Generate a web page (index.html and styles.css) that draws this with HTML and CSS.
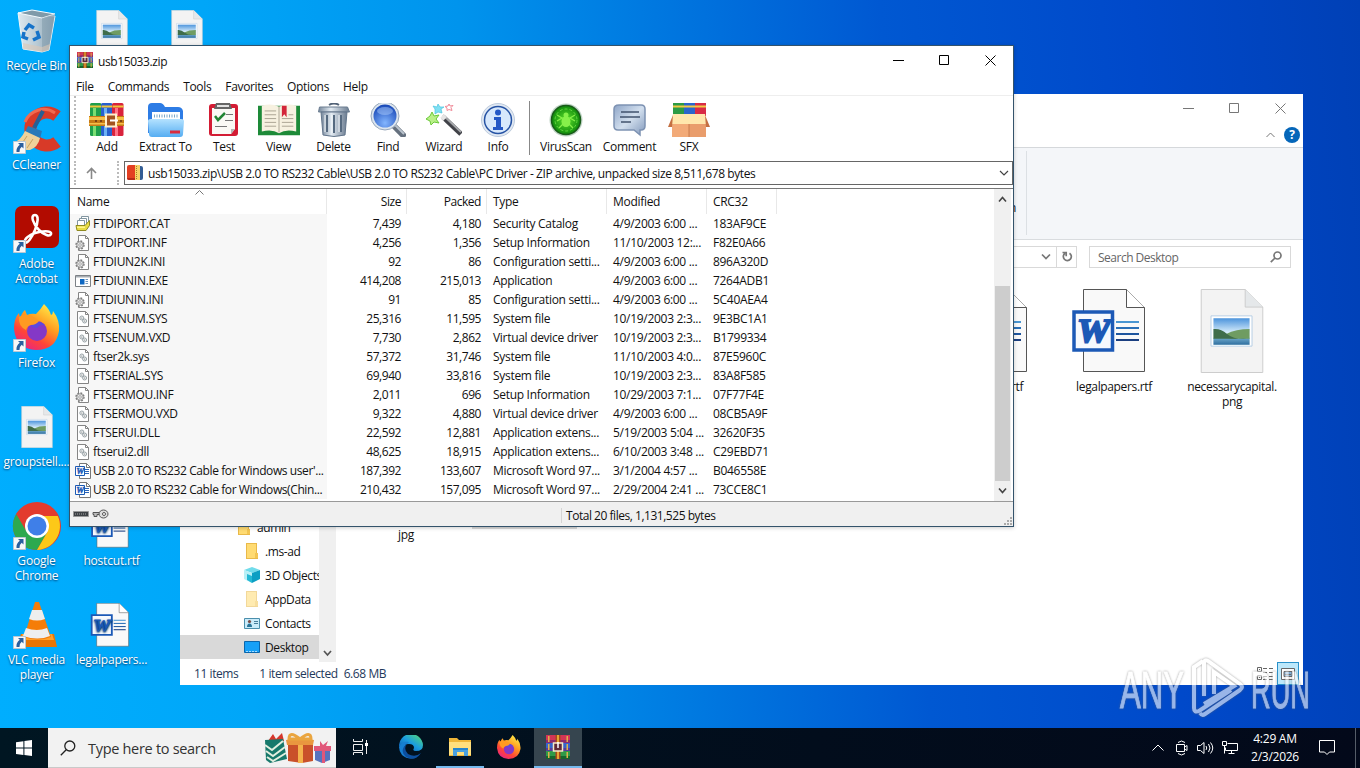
FILE: index.html
```html
<!DOCTYPE html>
<html lang="en">

<head>
    <meta charset="UTF-8">
    <meta name="viewport" content="width=device-width, initial-scale=1.0">
    <title>usb15033.zip</title>
    <link rel="stylesheet" href="styles.css">
</head>

<body>
    <!-- shared icons -->
    <svg class="defs" width="0" height="0">
        <defs>
            <linearGradient id="gSky" x1="0" y1="0" x2="0" y2="1">
                <stop offset="0" stop-color="#4c94dc" /><stop offset=".5" stop-color="#d3eafa" /><stop offset="1" stop-color="#e6f3fa" />
            </linearGradient>
            <linearGradient id="gSea" x1="0" y1="0" x2="0" y2="1">
                <stop offset="0" stop-color="#6fa9cc" /><stop offset="1" stop-color="#2f6f9f" />
            </linearGradient>
            <linearGradient id="gFox" x1="0.8" y1="0" x2="0.2" y2="1">
                <stop offset="0" stop-color="#fff04a" /><stop offset=".4" stop-color="#ff9a20" /><stop offset=".7" stop-color="#ff4438" /><stop offset="1" stop-color="#e6208c" />
            </linearGradient>
            <linearGradient id="gEdge" x1="0" y1="1" x2="1" y2="0">
                <stop offset="0" stop-color="#0b50a8" /><stop offset=".5" stop-color="#1b9de0" /><stop offset="1" stop-color="#5be06a" />
            </linearGradient>
            <linearGradient id="gMetal" x1="0" y1="0" x2="1" y2="0">
                <stop offset="0" stop-color="#76879b" /><stop offset=".4" stop-color="#e3ebf2" /><stop offset="1" stop-color="#6a7b90" />
            </linearGradient>
            <linearGradient id="gFolder" x1="0" y1="0" x2="0" y2="1">
                <stop offset="0" stop-color="#b4e2ff" /><stop offset="1" stop-color="#55adf2" />
            </linearGradient>
            <linearGradient id="gBubble" x1="0" y1="0" x2="1" y2="1">
                <stop offset="0" stop-color="#8ea5c7" /><stop offset=".5" stop-color="#d2dfee" /><stop offset="1" stop-color="#8198bb" />
            </linearGradient>
            <linearGradient id="gBin" x1="0" y1="0" x2="1" y2="0">
                <stop offset="0" stop-color="#dfe9ef" /><stop offset=".5" stop-color="#b9cbd6" /><stop offset="1" stop-color="#8aa3b4" />
            </linearGradient>
            <radialGradient id="gLens" cx=".5" cy=".8" r=".8">
                <stop offset="0" stop-color="#83b6ff" /><stop offset="1" stop-color="#1646b6" />
            </radialGradient>
            <radialGradient id="gVirus">
                <stop offset="0" stop-color="#5ee02d" /><stop offset="1" stop-color="#0f8a0b" />
            </radialGradient>
        </defs>

        <symbol id="winrar" viewBox="0 0 24 24">
            <path fill="#d23556" d="M0 0h24v8H0z" />
            <path fill="#8c2a6e" d="M0 5h24v3H0z" />
            <path fill="#3563cc" d="M0 8h24v8H0z" />
            <path fill="#5a3a98" d="M0 13h24v3H0z" />
            <path fill="#2f9a48" d="M0 16h24v8H0z" />
            <path fill="#15662c" d="M0 21h24v3H0z" />
            <path fill="#e0b24a" d="M2 1h1.500v6H2zm0 8h1.500v6H2zm0 8h1.500v6H2zm18.500-16H22v6h-1.500zm0 8H22v6h-1.500zm0 8H22v6h-1.500z" />
            <path fill="#a8481a" d="M9.500 0h5v24h-5z" />
            <path fill="#e6a534" d="M11 0h2v24h-2z" />
            <path fill="#5f2a38" stroke="#f4e9c6" stroke-width="1.500" d="M7.500 8h9v8h-9z" />
            <path stroke="#fff" stroke-width="1.500" d="M12 7v6" />
        </symbol>

        <symbol id="books" viewBox="0 0 36 34">
            <rect x="1" y="0" width="11.500" height="33" rx="1.500" fill="#1f9f4b" />
            <rect x="12" y="0" width="11.500" height="33" rx="1.500" fill="#2860ce" />
            <rect x="23" y="0" width="11.500" height="33" rx="1.500" fill="#d9233c" />
            <path fill="#7ade72" d="M4 5h3v28H4z" />
            <path fill="#6cb2f5" d="M15 5h3v28h-3z" />
            <path fill="#ff7288" d="M26 5h3v28h-3z" />
            <path fill="#f0c63c" d="M1 2.500h11v2H1zm11.500 0H23v2H12.500zm11 0h11v2h-11z" />
            <path fill="#c67a18" d="M0 13h35v10H0z" />
            <path fill="#f5c04a" d="M0 14h35v3H0zm0 6h35v1.500H0z" />
            <rect x="17" y="11.500" width="10" height="12" fill="#a35420" stroke="#fff0cc" stroke-width="2" />
            <path stroke="#fff" stroke-width="2" d="M21 17.500h8" />
            <path fill="#7d4314" d="M6 17h2v2H6zm5 0h2v2h-2zM31 17h2v2h-2z" />
        </symbol>

        <symbol id="gear-file" viewBox="0 0 16 16">
            <path fill="#fff" stroke="#858585" d="M3.500.5h7l3 3v12h-10z" />
            <path fill="none" stroke="#858585" d="M10.500.5v3h3" />
            <circle cx="5" cy="10" r="4" fill="#e3e3e3" stroke="#7d7d7d" stroke-width="1.400" stroke-dasharray="1.800 1.340" />
            <circle cx="5" cy="10" r="3.200" fill="#e9e9e9" stroke="#858585" stroke-width=".8" />
            <circle cx="5" cy="10" r="1.300" fill="#fff" stroke="#858585" stroke-width=".7" />
        </symbol>

        <symbol id="sys-file" viewBox="0 0 16 16">
            <path fill="#fff" stroke="#858585" d="M2.500.5h8l3 3v12h-11z" />
            <path fill="none" stroke="#858585" d="M10.500.5v3h3" />
            <circle cx="6.800" cy="7" r="2" fill="#eef1f2" stroke="#8f999d" stroke-width=".9" />
            <circle cx="9.600" cy="10" r="2" fill="#eef1f2" stroke="#8f999d" stroke-width=".9" />
            <circle cx="6.800" cy="7" r=".6" fill="#777" />
            <circle cx="9.600" cy="10" r=".6" fill="#777" />
        </symbol>

        <symbol id="cat-file" viewBox="0 0 16 16">
            <path fill="#fff" stroke="#8296a0" d="M6.500.5h7v8h-7z" />
            <path fill="#fff" stroke="#8296a0" d="M4.500 2.500h7v7h-7z" />
            <path fill="#fff" stroke="#8296a0" d="M2.500 4.500h7v6h-7z" />
            <path fill="#e8dc45" stroke="#8f8a20" d="M1 9.500h9l4.500-5v5l-3.500 5H2z" />
            <path fill="#fff58a" d="M2 10.500h8v1.500H2z" />
        </symbol>

        <symbol id="exe-file" viewBox="0 0 16 16">
            <path fill="#fff" stroke="#7c8186" d="M.5 2.500h15v11H.5z" />
            <path fill="#a7adb2" d="M1 3h14v1.500H1z" />
            <path fill="#0d67c2" d="M5 6h4.500v5.500H5z" />
            <path stroke="#6e96bd" d="M10.500 6.500H13m-2.500 2H13m-2.500 2H13" />
        </symbol>

        <symbol id="doc-file" viewBox="0 0 16 16">
            <path fill="#fff" stroke="#777" d="M4.500.5h7l4 4v11h-11z" />
            <path fill="none" stroke="#777" d="M11.500.5v4h4" />
            <path stroke="#2a64b8" d="M10 6.500h4m-4 2h4m-4 2h4" />
            <path fill="#fff" stroke="#1b5ab4" d="M.5 3.500h9v9h-9z" />
            <text x="1.200" y="11" class="w-mark small" font-size="8" textLength="7.500" lengthAdjust="spacingAndGlyphs">W</text>
        </symbol>

        <symbol id="word" viewBox="0 0 74 84">
            <path fill="#f9f9f9" stroke="#555" d="M11.500.5h43l18 18v64h-61z" />
            <path fill="#fff" stroke="#555" d="M54.500.5v18h18" />
            <path stroke="#4a96d2" stroke-width="2" d="M44 33h23" />
            <path stroke="#2a70b8" stroke-width="2" d="M44 39h23" />
            <path stroke="#1e559e" stroke-width="2" d="M44 45h23" />
            <path stroke="#1b3f80" stroke-width="2" d="M44 51h23" />
            <path fill="#f6f9fd" stroke="#1c59b6" stroke-width="3.500" d="M2 23h38.500v38H2z" />
            <text x="5" y="53" class="w-mark" font-size="33" textLength="33" lengthAdjust="spacingAndGlyphs">W</text>
        </symbol>

        <symbol id="picture" viewBox="0 0 64 86">
            <path fill="#f3f3f3" stroke="#ccc" d="M.5.5h45l18 18v67H.5z" />
            <path fill="#e5e8ea" stroke="#ccc" d="M45.500.5v18h18" />
            <path fill="#fff" stroke="#b6cee4" d="M10.500 27.500h42v31h-42z" />
            <path fill="url(#gSky)" d="M13 30h37v28H13z" />
            <path fill="url(#gSea)" d="M13 50h37v7H13z" />
            <path fill="#6f9c62" d="M26 46q10-5 24-5v10H30z" />
            <path fill="#3f6d4b" d="M13 41q7-1 14 5t20 5H13z" />
        </symbol>

        <symbol id="arrow-link" viewBox="0 0 13 13">
            <path fill="#f8f8f8" stroke="#b9c8d4" d="M.5.5h12v12H.5z" />
            <path fill="#2a5f9e" d="M5 2h5.500v5.500L8.700 5.700Q6.300 7.500 6.500 11H3.500Q3 6.500 6.800 3.800z" />
        </symbol>

        <symbol id="firefox" viewBox="0 0 46 46">
            <path fill="url(#gFox)" d="M30 0q6 6 7 11 2-1 2-4 7 9 6 20Q42 46 22 46 2 45 0 25 0 14 5 9l1 5q3-7 5-8l2 5q4-2 9-1 5-5 8-10z" />
            <circle cx="23" cy="27" r="10" fill="#8438c7" />
            <path fill="#5c49df" d="M16 19q9-4 15 2-5-1-8 3-6 0-7-5z" />
            <path fill="#ff9a22" d="M5 13q8-5 16 1l4 3q-3 4-8 4-4 1-5 5-8-4-7-13z" />
        </symbol>

        <symbol id="folder-y" viewBox="0 0 16 16">
            <path fill="#e9b949" d="M2 0h11v10h1v6H2z" />
            <path fill="#ffdb72" d="M3 1h9v14H3z" />
            <path fill="#f3c552" d="M11 10h3v5h-3z" />
        </symbol>
    </svg>

    <div class="desktop">
        <!-- desktop shortcuts -->
        <div class="shortcuts">
            <div class="shortcut">
                <svg class="pic" viewBox="0 0 48 48">
                    <path fill="url(#gBin)" stroke="#eef6fa" d="M5 3l37 3-6 34-7 2-19-3z" />
                    <path fill="#7f9aa9" stroke="#f5fbff" d="M5 3l14-3 23 4-13 4z" />
                    <path fill="#7d97a8" opacity=".5" d="M29 8l13-4-6 36-7 2z" />
                    <path fill="none" stroke="#1673c9" stroke-width="3.500" d="M12 20l4-5 5 3M24 21l2 6-6 3M15 29l-5-2 1-5" />
                    <path fill="#dcc8b5" opacity=".6" d="M10 33l19 4 8-3-1 6-7 2-19-3z" />
                </svg>
                <span>Recycle Bin</span>
            </div>
            <div class="shortcut">
                <svg class="pic" viewBox="0 0 48 48">
                    <path fill="none" stroke="#d83a28" stroke-width="12" d="M44 7A16.500 16.500 0 1 0 44 33" />
                    <path fill="none" stroke="#f06a50" stroke-width="3" d="M42 4A20 20 0 0 0 12 13" />
                    <path stroke="#285f94" stroke-width="4" d="M30 2L21 19" />
                    <path fill="#2a79b8" d="M15 17l14 5-2 8-15-7z" />
                    <path fill="#efd29a" d="M12 22l15 7q-2 9-10 12Q6 42 0 34q8-3 12-12z" />
                    <path stroke="#c9a160" d="M14 27l-6 9m12-6l-6 9" />
                    <use href="#arrow-link" x="0" y="32" width="13" height="13" />
                </svg>
                <span>CCleaner</span>
            </div>
            <div class="shortcut">
                <svg class="pic" viewBox="0 0 48 48">
                    <rect x="2" y="-2" width="44" height="42" rx="7" fill="#b20b00" />
                    <path fill="none" stroke="#fff" stroke-width="2.600" d="M22 7c-5 0-2 9 4 15 5 5 11 7 12 4 1-4-10-3-16-1s-11 6-10 9c2 3 7-5 10-12s4-15 0-15z" />
                    <use href="#arrow-link" x="0" y="32" width="13" height="13" />
                </svg>
                <span>Adobe<br>Acrobat</span>
            </div>
            <div class="shortcut">
                <svg class="pic" viewBox="0 0 48 48">
                    <use href="#firefox" x="1" y="-3" width="46" height="46" />
                    <use href="#arrow-link" x="0" y="32" width="13" height="13" />
                </svg>
                <span>Firefox</span>
            </div>
            <div class="shortcut">
                <svg class="pic" viewBox="0 0 48 48"><use href="#picture" x="8" y="0" width="32" height="42" /></svg>
                <span>groupstell....</span>
            </div>
            <div class="shortcut">
                <svg class="pic" viewBox="0 0 48 48">
                    <g transform="translate(0 -1)">
                        <circle cx="24" cy="22" r="24" fill="#e33b2e" />
                        <path fill="#2da94f" d="M3.200 10A24 24 0 0 0 24 46l10.400-18L24 22z" />
                        <path fill="#fdc818" d="M24 46A24 24 0 0 0 44.800 12H24l10.400 16z" />
                        <path fill="#e33b2e" d="M3.200 10l10 17L24 12h20.800A24 24 0 0 0 3.200 10z" />
                        <circle cx="24" cy="22" r="12" fill="#fff" />
                        <circle cx="24" cy="22" r="9.500" fill="#3f7fe8" />
                    </g>
                    <use href="#arrow-link" x="0" y="32" width="13" height="13" />
                </svg>
                <span>Google<br>Chrome</span>
            </div>
            <div class="shortcut">
                <svg class="pic" viewBox="0 0 48 48">
                    <path fill="#e87504" d="M8 30h33l3 13H4z" />
                    <path fill="#ffa12b" d="M9 30h30l2 6H8z" />
                    <path fill="#f57d08" d="M22-2h4l12 35q-13 5-27 0z" />
                    <path fill="#eee" d="M19 6h10l3 9q-8 3-16 0zm-6 18q11 4 21 0l3 8q-12 5-27 0z" />
                    <use href="#arrow-link" x="0" y="32" width="13" height="13" />
                </svg>
                <span>VLC media<br>player</span>
            </div>
            <div class="shortcut">
                <svg class="pic" viewBox="0 0 48 48"><use href="#picture" x="8" y="0" width="32" height="42" /></svg>
            </div>
            <div class="shortcut hostcut">
                <svg class="pic" viewBox="0 0 48 48"><use href="#word" x="2" y="0" width="40" height="43" /></svg>
                <span>hostcut.rtf</span>
            </div>
            <div class="shortcut">
                <svg class="pic" viewBox="0 0 48 48"><use href="#word" x="2" y="-1" width="40" height="44" /></svg>
                <span>legalpapers...</span>
            </div>
            <div class="shortcut">
                <svg class="pic" viewBox="0 0 48 48"><use href="#picture" x="8" y="0" width="32" height="42" /></svg>
            </div>
        </div>

        <!-- explorer window -->
        <div class="window explorer">
            <div class="ex-title">
                <svg width="11" height="11"><path d="M0 5.500h11" /></svg>
                <svg width="11" height="11"><path d="M.5.5h9v9h-9z" /></svg>
                <svg width="11" height="11"><path d="M.5.5l10 10m0-10l-10 10" /></svg>
            </div>
            <div class="ex-tabs">
                <svg width="9" height="6"><path d="M.5 5l4-4 4 4" /></svg>
                <span class="help">?</span>
            </div>
            <div class="ribbon">
                <div class="ribbon-group"><span>Invert selection</span></div>
            </div>
            <div class="address-row">
                <div class="address">
                    <svg class="drop" width="10" height="8"><path d="M1 1.500l4 4 4-4" /></svg>
                    <div class="refresh">
                        <svg width="12" height="12"><path d="M8.500 2.200A4 4 0 1 1 4 2.300M1.500 1.500h3.700v3.700" /></svg>
                    </div>
                </div>
                <div class="search-box">
                    <span>Search Desktop</span>
                    <svg width="12" height="12"><circle cx="7.500" cy="4.500" r="3.500" /><path d="M5 7L.8 11.200" /></svg>
                </div>
            </div>
            <div class="ex-body">
                <div class="tree">
                    <div class="node top"><svg width="16" height="16"><use href="#folder-y" /></svg>admin</div>
                    <div class="node"><svg width="16" height="16"><use href="#folder-y" /></svg>.ms-ad</div>
                    <div class="node">
                        <svg width="16" height="16">
                            <path fill="#71dceb" d="M0 3l8-3 8 3-8 3z" /><path fill="#b9f0f6" d="M0 3l8 3v10l-8-4z" /><path fill="#0c9fc3" d="M8 6l8-3v9l-8 4z" /><path fill="#25b9d5" d="M3 7l5 2v7l-5-3z" />
                        </svg>3D Objects
                    </div>
                    <div class="node"><svg class="faded" width="16" height="16"><use href="#folder-y" /></svg>AppData</div>
                    <div class="node">
                        <svg width="16" height="16">
                            <path fill="#c9ebfa" stroke="#4b8fac" d="M.5 3.500h15v10H.5z" /><circle cx="5.500" cy="6.500" r="1.600" fill="#784a45" /><path fill="#28759a" d="M3 12q0-3.500 2.500-3.500T8 12z" /><path stroke="#467e9b" d="M10 6.500h4m-4 2h4" />
                        </svg>Contacts
                    </div>
                    <div class="node selected">
                        <svg width="16" height="16"><path fill="#16a0f7" stroke="#0b66ac" d="M.5 2.500h15v11H.5z" /><path stroke="#a5dcff" stroke-dasharray="2 1" d="M2 12.500h12" /></svg>Desktop
                    </div>
                </div>
                <div class="tree-scroll"><svg width="9" height="7"><path d="M1 1l3.500 4L8 1" /></svg></div>
                <div class="files">
                    <div class="file first"><svg class="word-pic" width="74" height="84"><use href="#word" /></svg><span>hostcut.rtf</span></div>
                    <div class="file"><svg class="word-pic" width="74" height="84"><use href="#word" /></svg><span>legalpapers.rtf</span></div>
                    <div class="file"><svg width="64" height="84"><use href="#picture" /></svg><span>necessarycapital.<br>png</span></div>
                    <div class="file under"><span>jpg</span></div>
                    <div class="file"><div class="picked"></div></div>
                </div>
            </div>
            <div class="ex-status">
                <span>11 items</span>
                <span class="chosen">1 item selected</span>
                <span>6.68 MB</span>
                <div class="views">
                    <svg width="17" height="14"><path d="M.5.5h4v4h-4zM.5 8.500h4v4h-4zM2 2.500h1M2 10.500h1M6 1.500h4m2 0h4M6 5.500h4m2 0h4M6 9.500h4m2 0h4M6 12.500h4m2 0h4" /></svg>
                    <div class="view-on"><svg width="14" height="12"><path fill="#fff" d="M.5.5h13v11H.5z" /><path fill="#7fb2dd" d="M3 3.500h8v5H3zM4 6.500h6" /></svg></div>
                </div>
            </div>
        </div>

        <!-- archive window -->
        <div class="window archive">
            <div class="title-bar">
                <svg width="16" height="16"><use href="#winrar" /></svg>
                <span>usb15033.zip</span>
                <div class="buttons">
                    <svg width="11" height="11"><path d="M0 5.500h11" /></svg>
                    <svg width="11" height="11"><path d="M.5.5h9v9h-9z" /></svg>
                    <svg width="11" height="11"><path d="M.5.5l10 10m0-10l-10 10" /></svg>
                </div>
            </div>
            <div class="menu">
                <span>File</span><span>Commands</span><span>Tools</span><span>Favorites</span><span>Options</span><span>Help</span>
            </div>
            <div class="toolbar">
                <div class="tool add"><svg viewBox="0 0 36 34"><use href="#books" width="36" height="34" /></svg>Add</div>
                <div class="tool extract">
                    <svg viewBox="0 0 36 34">
                        <path fill="#2d7ce5" d="M0 4q0-4 4-4h8q3 0 5 4h13q4 0 5 4v22H0z" />
                        <path fill="#fff" d="M4 9h28v14H4z" />
                        <path stroke="#7ba8ca" stroke-dasharray="1 1.500" stroke-width="3" d="M6 13h24" />
                        <path fill="url(#gFolder)" d="M0 18q0-2 3-2h30q3 0 3 2l-1 13q0 3-3 3H4q-3 0-3-3z" />
                        <path stroke="#d92c3e" stroke-width="3" d="M22 29h10" />
                    </svg>Extract To
                </div>
                <div class="tool test">
                    <svg viewBox="0 0 36 34">
                        <rect x="3" y="1" width="29" height="32" rx="3" fill="#d31c34" />
                        <path fill="#faf9f5" d="M6 5h23v21l-4 5H6z" />
                        <path fill="#666" d="M10 0h14l2 6H8z" /><path stroke="#e2e2e2" stroke-width="2" d="M11 3h12" />
                        <path fill="none" stroke="#228534" stroke-width="2.500" d="M9 13l3 4 7-7" />
                        <path stroke="#777" d="M20 11.500h7m-8 6h8m-18 6h12" />
                        <path fill="#b5b5b5" d="M25 31v-5h4z" />
                    </svg>Test
                </div>
                <div class="tool view">
                    <svg viewBox="0 0 44 34">
                        <path fill="#1d8a38" d="M0 2h44v31H0z" />
                        <path fill="#f7f1e0" d="M4 2q10-3 18 1 8-4 18-1v27q-11-3-18 2-7-5-18-2z" />
                        <path fill="none" stroke="#a9a291" d="M22 3v27M7 7.500h12M7 11.500h12M7 15.500h12M7 19.500h12M7 23.500h12M25 15.500h12M25 19.500h12M25 23.500h12M32 11.500h5" />
                        <path fill="#d3263a" d="M25 2h5v12l-2.500-3-2.500 3z" />
                    </svg>View
                </div>
                <div class="tool delete">
                    <svg viewBox="0 0 36 34">
                        <path fill="none" stroke="#526276" stroke-width="2" d="M13 2q5-3 10 0" />
                        <path fill="url(#gMetal)" stroke="#6a7c90" d="M3.500 4h28l2 5h-31z" />
                        <path fill="url(#gMetal)" stroke="#62758b" d="M5 9h26l-2 23q-11 3-22 0z" />
                        <path stroke="#566a80" stroke-width="2" d="M11 12v17m7-17v18m7-18v17" />
                        <path stroke="#f3f7fa" stroke-width="1" d="M9 12v17m7-17v18m7-18v17" />
                    </svg>Delete
                </div>
                <div class="tool find">
                    <svg viewBox="0 0 36 34">
                        <path stroke="#65707e" stroke-width="6" stroke-linecap="round" d="M25 24l8 8" />
                        <path stroke="#bac3cd" stroke-width="2" d="M25 22l9 9" />
                        <circle cx="15" cy="13" r="14" fill="#dce5ee" stroke="#98a8bb" />
                        <circle cx="15" cy="13" r="11.500" fill="url(#gLens)" />
                        <ellipse cx="15" cy="8" rx="8" ry="4" fill="#b6d4ff" opacity=".45" />
                    </svg>Find
                </div>
                <div class="tool wizard">
                    <svg viewBox="0 0 36 34">
                        <path stroke="#414248" stroke-width="5" d="M17 14l18 17" /><path stroke="#a5a7aa" stroke-width="2" d="M17 12l18 17" /><path stroke="#e5e5e5" stroke-width="5" d="M16 13l3 3" />
                        <path fill="#b9f088" stroke="#6cc93a" d="M6 9l2 4 5-1-3 4 3 4-5-1-3 3-1-4-4-2 4-3z" />
                        <path fill="#7fe0f3" stroke="#4cc4e0" stroke-width=".7" d="M12 1l2 3h4l-3 2 1 4-4-1-3 2v-5l-2-3 4 1z" />
                        <path fill="none" stroke="#f08a98" d="M23 1l1 2 3-.5-2 2 1 3-3-1-2 1V5l-2-1.500 3-.5z" />
                    </svg>Wizard
                </div>
                <div class="tool info">
                    <svg viewBox="0 0 36 34">
                        <circle cx="18" cy="17" r="16.500" fill="#e1e9f3" stroke="#bdcbdd" />
                        <circle cx="18" cy="17" r="13.500" fill="#d7e8fc" stroke="#2653a4" stroke-width="1.500" />
                        <circle cx="18" cy="9.500" r="3" fill="#2458c6" /><path fill="#2458c6" d="M14 14h7v10h2v3H13v-3h3v-7h-2z" />
                    </svg>Info
                </div>
                <div class="tool virus">
                    <svg viewBox="0 0 36 34">
                        <circle cx="18" cy="17" r="16.500" fill="#bed2c4" /><circle cx="18" cy="17" r="14.500" fill="url(#gVirus)" stroke="#195a19" stroke-width="1.500" />
                        <circle cx="18" cy="17" r="11" fill="none" stroke="#6fe04a" stroke-width=".8" stroke-dasharray="3 2" />
                        <ellipse cx="18" cy="18.500" rx="4.500" ry="5.500" fill="#86f04a" /><circle cx="18" cy="12" r="2.500" fill="#86f04a" />
                        <path fill="none" stroke="#86f04a" stroke-width="1.300" d="M9 12l5 3-5 3m2 7l4-4m12-9l-5 3 5 3m-2 7l-4-4" />
                    </svg>VirusScan
                </div>
                <div class="tool comment">
                    <svg viewBox="0 0 36 34">
                        <path fill="url(#gBubble)" stroke="#7d92b2" stroke-width="1.500" d="M7 2h22q4 0 4 4v17q0 4-4 4h-1v5l-6-5H6q-4 0-4-4V6q0-4 5-4z" />
                        <path stroke="#42536d" stroke-width="1.500" d="M9 9h18m-19 5h20M9 19h10" />
                    </svg>Comment
                </div>
                <div class="tool sfx">
                    <svg viewBox="0 0 42 34">
                        <path fill="#2c9b45" d="M5 0h11v13H5z" /><path fill="#2b66cc" d="M16 0h11v13H16z" /><path fill="#d82b46" d="M27 0h11v13H27z" />
                        <path stroke="#f3c944" stroke-width="2" d="M5 3.500h33" />
                        <path fill="#f2aa78" d="M4 20h17v14H4z" /><path fill="#e99d6c" d="M21 20h17v14H21z" /><path stroke="#c97d4e" d="M21 21v13" />
                        <path fill="#ffe7ad" d="M5 11h32l2 10H3z" /><path fill="#c47042" d="M5 12L0 24h4zm32 0l5 12h-4z" />
                    </svg>SFX
                </div>
            </div>
            <div class="path-row">
                <div class="up"><svg width="11" height="12"><path d="M5.500 12V1.500M1 6l4.500-4.500L10 6" /></svg></div>
                <div class="path">
                    <svg width="16" height="16">
                        <rect x="10" y="1" width="6" height="14" rx="2" fill="#335d94" /><path fill="#f6d267" d="M8 0h5v15H8z" /><path fill="#e33f22" d="M0 2q0-2 2-2h6v15H2q-2 0-2-2z" /><path fill="#b72918" d="M0 13h8v2H2q-2 0-2-2z" /><path stroke="#a07d28" stroke-dasharray="1 1" d="M9.500 1v13" />
                    </svg>
                    <span>usb15033.zip\USB 2.0 TO RS232 Cable\USB 2.0 TO RS232 Cable\PC Driver - ZIP archive, unpacked size 8,511,678 bytes</span>
                    <svg class="drop" width="10" height="7"><path d="M1 1l4 4 4-4" /></svg>
                </div>
            </div>
            <div class="list">
                <div class="rows">
                    <div class="row head"><span>Name<svg width="9" height="5"><path d="M.5 4.500l4-4 4 4" /></svg></span><span>Size</span><span>Packed</span><span>Type</span><span>Modified</span><span>CRC32</span></div>
                    <div class="row"><span><svg><use href="#cat-file" /></svg>FTDIPORT.CAT</span><span>7,439</span><span>4,180</span><span>Security Catalog</span><span>4/9/2003 6:00 ...</span><span>183AF9CE</span></div>
                    <div class="row"><span><svg><use href="#gear-file" /></svg>FTDIPORT.INF</span><span>4,256</span><span>1,356</span><span>Setup Information</span><span>11/10/2003 12:...</span><span>F82E0A66</span></div>
                    <div class="row"><span><svg><use href="#gear-file" /></svg>FTDIUN2K.INI</span><span>92</span><span>86</span><span>Configuration setti...</span><span>4/9/2003 6:00 ...</span><span>896A320D</span></div>
                    <div class="row"><span><svg><use href="#exe-file" /></svg>FTDIUNIN.EXE</span><span>414,208</span><span>215,013</span><span>Application</span><span>4/9/2003 6:00 ...</span><span>7264ADB1</span></div>
                    <div class="row"><span><svg><use href="#gear-file" /></svg>FTDIUNIN.INI</span><span>91</span><span>85</span><span>Configuration setti...</span><span>4/9/2003 6:00 ...</span><span>5C40AEA4</span></div>
                    <div class="row"><span><svg><use href="#sys-file" /></svg>FTSENUM.SYS</span><span>25,316</span><span>11,595</span><span>System file</span><span>10/19/2003 2:3...</span><span>9E3BC1A1</span></div>
                    <div class="row"><span><svg><use href="#sys-file" /></svg>FTSENUM.VXD</span><span>7,730</span><span>2,862</span><span>Virtual device driver</span><span>10/19/2003 2:3...</span><span>B1799334</span></div>
                    <div class="row"><span><svg><use href="#sys-file" /></svg>ftser2k.sys</span><span>57,372</span><span>31,746</span><span>System file</span><span>11/10/2003 4:0...</span><span>87E5960C</span></div>
                    <div class="row"><span><svg><use href="#sys-file" /></svg>FTSERIAL.SYS</span><span>69,940</span><span>33,816</span><span>System file</span><span>10/19/2003 2:3...</span><span>83A8F585</span></div>
                    <div class="row"><span><svg><use href="#gear-file" /></svg>FTSERMOU.INF</span><span>2,011</span><span>696</span><span>Setup Information</span><span>10/29/2003 7:1...</span><span>07F77F4E</span></div>
                    <div class="row"><span><svg><use href="#sys-file" /></svg>FTSERMOU.VXD</span><span>9,322</span><span>4,880</span><span>Virtual device driver</span><span>4/9/2003 6:00 ...</span><span>08CB5A9F</span></div>
                    <div class="row"><span><svg><use href="#sys-file" /></svg>FTSERUI.DLL</span><span>22,592</span><span>12,881</span><span>Application extens...</span><span>5/19/2003 5:04 ...</span><span>32620F35</span></div>
                    <div class="row"><span><svg><use href="#sys-file" /></svg>ftserui2.dll</span><span>48,625</span><span>18,915</span><span>Application extens...</span><span>6/10/2003 3:48 ...</span><span>C29EBD71</span></div>
                    <div class="row long"><span><svg><use href="#doc-file" /></svg>USB 2.0 TO RS232 Cable for Windows user'...</span><span>187,392</span><span>133,607</span><span>Microsoft Word 97...</span><span>3/1/2004 4:57 ...</span><span>B046558E</span></div>
                    <div class="row long"><span><svg><use href="#doc-file" /></svg>USB 2.0 TO RS232 Cable for Windows(Chin...</span><span>210,432</span><span>157,095</span><span>Microsoft Word 97...</span><span>2/29/2004 2:41 ...</span><span>73CCE8C1</span></div>
                </div>
                <div class="scroll">
                    <svg width="9" height="7"><path d="M1 5.500l3.500-4 3.500 4" /></svg>
                    <div class="thumb"></div>
                    <svg width="9" height="7"><path d="M1 1.500l3.500 4 3.500-4" /></svg>
                </div>
            </div>
            <div class="status">
                <div class="status-left">
                    <svg width="36" height="12">
                        <path fill="#3d4145" stroke="#999" d="M.5 3.500h15v5H.5z" /><path stroke="#aaa" stroke-dasharray="1 1" d="M2 6h11" />
                        <path fill="#bbb" stroke="#555" d="M20 4.500h8v2h-4v2h-3v-2h-1z" /><ellipse cx="30.500" cy="6" rx="4.500" ry="4" fill="#ddd" stroke="#555" /><circle cx="31" cy="6" r="1.500" fill="#fff" stroke="#555" />
                    </svg>
                </div>
                <div class="total">Total 20 files, 1,131,525 bytes</div>
                <svg class="grip" width="10" height="10"><path stroke="#aaa" stroke-width="2" stroke-dasharray="2 1" d="M7 2h2M4 5h5M1 8h8" /></svg>
            </div>
        </div>

        <svg class="watermark" width="196" height="66">
            <text x="3" y="52" textLength="64" lengthAdjust="spacingAndGlyphs">ANY</text>
            <path d="M87 40V7q0-4 4-2l32 23q4 3 0 6l-35 24q-3 2-5-1M86 5l-9 6v41q0 5 5 3l32-21M97 38V16l20 14-30 18" />
            <text x="134" y="52" textLength="59" lengthAdjust="spacingAndGlyphs">RUN</text>
        </svg>
    </div>

    <div class="taskbar">
        <div class="start"><svg width="16" height="16"><path fill="#fff" d="M0 2.300L7.400 1.200v6.400H0zm8.400-1.200L16 0v7.600H8.400zM0 8.600h7.400V15L0 13.900zm8.400 0H16V16l-7.600-1.100z" /></svg></div>
        <div class="task-search">
            <svg width="16" height="16"><circle cx="9.800" cy="6" r="5" fill="none" stroke="#222" stroke-width="1.300" /><path stroke="#222" stroke-width="1.300" d="M6.200 9.800L.8 15.200" /></svg>
            <span>Type here to search</span>
            <svg class="gifts" width="68" height="34">
                <path fill="#d5372c" d="M4 10l5-7 3 5 6-6 2 8z" /><path fill="#17796b" d="M1 9l18-1 4 20-17 4-4-3z" />
                <path fill="none" stroke="#e2efdf" stroke-width="2" d="M1 14l7 5 11-9M2 20l7 5 12-9M3 26l6 4 13-8" />
                <path fill="#c9502a" d="M24 10h25v20l-11 2-14-2z" /><path fill="#f4b14c" d="M34 10h5v22h-5z" /><path fill="#e9963f" d="M22 9l14-2 14 2-1 5H23z" />
                <path fill="none" stroke="#eaa53f" stroke-width="3" d="M36 8q-11-9-11 0h22q0-9-11 0" />
                <path fill="#5773bd" d="M51 16h15v13l-8 3-7-3z" /><path fill="#e1577a" d="M50 15h17v5H50zm6-5l3 4 5-4-2 5h-6zm2 8h3v14h-3z" />
            </svg>
        </div>
        <div class="task first"><svg width="17" height="16"><path fill="none" stroke="#eee" d="M1.500 0v2.500h9V0M1.500 5.500h9v6h-9zM1.500 16v-2.500h9V16M14.500 1v14" /><path fill="#fff" d="M13 4h3v3h-3z" /></svg></div>
        <div class="task">
            <svg width="24" height="24">
                <path fill="url(#gEdge)" d="M0 12A12 12 0 0 1 24 10q0 6-7 6-4 0-2-3 0-4-5-4-8 0-10 3z" />
                <path fill="#167ed0" d="M0 12q3-6 10-5-6 3-4 9t12 6Q10 26 3 20q-3-4-3-8z" /><path fill="#0c4f9f" d="M10 7q-7 6-1 12 7 4 13-1-6 9-15 4-8-7 3-15z" />
            </svg>
        </div>
        <div class="task open">
            <svg width="22" height="22"><path fill="#efb638" d="M0 2h8l2 2h12v16H0z" /><path fill="#ffdf7d" d="M0 6h22v13H0z" /><path fill="#4aa1df" d="M4 12h15v8h-4v-4H8v4H4z" /><path fill="#2585cd" d="M4 12h15v2H4z" /></svg>
        </div>
        <div class="task"><svg width="24" height="24"><use href="#firefox" /></svg></div>
        <div class="task open active"><svg width="24" height="24"><use href="#winrar" /></svg></div>
        <div class="tray">
            <svg width="12" height="12"><path d="M.5 8.500L6 3l5.500 5.500" /></svg>
            <svg class="cam" width="14" height="16"><path d="M1.500 4.500h8v7h-8zM9.500 7l2.500-1.500v5L9.500 9M3 2.500q3.500-3 7 0M3 13.500q3.500 3 7 0" /></svg>
            <svg width="17" height="14"><path d="M.5 4.500h3l3.500-3v11l-3.500-3h-3zM9 5q1.500 2 0 4M11.500 3q3 4 0 8M13.500 1.500q4.500 5.500 0 11" /></svg>
            <svg width="17" height="14"><path d="M5.500 2.500h10v7H3.500v-3M.5.500h4v4h-4zM2.500 4.500v8M9.500 9.500v3M6.500 12.500h6" /></svg>
            <div class="clock">4:29 AM<br>2/3/2026</div>
            <svg class="note" width="17" height="17"><path d="M.5.500h15v11.500h-5l-2.500 2.500L5.500 12h-5z" /></svg>
            <div class="peek"></div>
        </div>
    </div>
</body>

</html>
```
FILE: styles.css
```css
* {
    box-sizing: border-box;
}

body {
    margin: 0;
    width: 1360px;
    height: 768px;
    overflow: hidden;
    font-family: "Open Sans", "Noto Sans", sans-serif;
    font-size: 12px;
    letter-spacing: -0.3px;
    line-height: 15px;
    color: #111;
    white-space: nowrap;
}

svg {
    display: block;
    flex: none;
}

.defs {
    position: absolute;
}

.w-mark {
    font-family: "Liberation Serif", serif;
    font-weight: bold;
    font-style: italic;
    fill: #1c59b6;
    stroke: #1c59b6;
    stroke-width: 2px;
}

.w-mark.small {
    stroke-width: 0.4px;
}

.desktop {
    position: relative;
    height: 728px;
    overflow: hidden;
    background: linear-gradient(86deg, #00aefe 0%, #00a6f8 18%, #0094ed 36%, #0078e0 50%, #0058d2 66%, #0049ca 84%, #0040b6 100%);
}

.shortcuts {
    display: grid;
    grid-template-columns: repeat(3, 75px);
    grid-template-rows: repeat(7, 99px);
    grid-auto-flow: column;
}

.shortcut {
    display: flex;
    flex-direction: column;
    align-items: center;
    padding: 10px 2px 0 0;
    color: #fff;
    text-align: center;
    text-shadow: 0 1px 2px #00386c;
    letter-spacing: -0.2px;
}

.shortcut .pic {
    width: 48px;
    height: 48px;
    overflow: visible;
}

.hostcut {
    grid-row: 6;
}

/* windows */
.window {
    position: absolute;
    display: flex;
    flex-direction: column;
    background: #fff;
}

.explorer {
    left: 180px;
    top: 94px;
    width: 1123px;
    height: 591px;
}

.ex-title {
    display: flex;
    justify-content: flex-end;
    gap: 35px;
    height: 28px;
    padding: 9px 17px 0 0;
}

.ex-title svg,
.ex-tabs svg,
.address svg,
.search-box svg,
.tree-scroll svg {
    fill: none;
    stroke: #777;
}

.ex-tabs {
    display: flex;
    justify-content: flex-end;
    align-items: center;
    gap: 9px;
    height: 26px;
    padding-right: 3px;
    border-bottom: 1px solid #d5d8db;
}

.help {
    width: 16px;
    height: 16px;
    border-radius: 50%;
    background: #0566b9;
    color: #fff;
    font-weight: bold;
    text-align: center;
}

.ribbon {
    height: 92px;
    padding: 3px 0;
    background: #f4f6f9;
    border-bottom: 1px solid #d9dcdf;
}

.ribbon-group {
    display: flex;
    justify-content: flex-end;
    width: 847px;
    height: 84px;
    padding: 49px 10px 0 0;
    border-right: 1px solid #dce0e4;
}

.address-row {
    display: flex;
    justify-content: space-between;
    height: 34px;
    padding: 6px 12px 6px 200px;
}

.address {
    display: flex;
    align-items: center;
    justify-content: flex-end;
    gap: 5px;
    width: 697px;
    border: 1px solid #d9d9d9;
}

.address svg,
.search-box svg,
.tree-scroll svg {
    stroke-width: 1.7;
}

.refresh {
    display: flex;
    align-items: center;
    justify-content: center;
    width: 20px;
    height: 20px;
    border-left: 1px solid #d9d9d9;
}

.search-box {
    display: flex;
    align-items: center;
    justify-content: space-between;
    width: 202px;
    padding: 0 8px;
    border: 1px solid #d9d9d9;
    color: #666;
    letter-spacing: -0.5px;
}

.ex-body {
    display: flex;
    flex: 1;
    min-height: 0;
}

.tree {
    display: flex;
    flex-direction: column;
    justify-content: flex-end;
    width: 139px;
    padding-bottom: 3px;
    overflow: hidden;
    letter-spacing: -0.4px;
}

.node {
    display: flex;
    align-items: center;
    flex: none;
    gap: 5px;
    height: 24px;
    padding-left: 64px;
    overflow: hidden;
}

.node.top {
    padding-left: 56px;
}

.node.selected {
    background: #d9d9d9;
}

.faded {
    opacity: 0.55;
}

.tree-scroll {
    display: flex;
    align-items: flex-end;
    width: 17px;
    padding: 0 0 5px 4px;
    background: #f0f0f0;
}

.tree-scroll svg {
    stroke: #555;
}

.files {
    display: grid;
    flex: 1;
    grid-template-columns: repeat(8, 118px);
    grid-template-rows: 132px 132px;
    padding: 15px 0 0 11px;
}

.file {
    display: flex;
    flex-direction: column;
    align-items: center;
    gap: 6px;
    text-align: center;
    letter-spacing: -0.35px;
}

.word-pic {
    margin-right: 10px;
}

.file.first {
    grid-column: 6;
}

.file.under {
    grid-column: 1;
    grid-row: 2;
    padding-top: 106px;
}

.file:last-child {
    grid-row: 2;
    grid-column: 2;
}

.picked {
    width: 105px;
    height: 108px;
    background: #d9d9d9;
}

.ex-status {
    display: flex;
    align-items: center;
    gap: 6px;
    height: 23px;
    padding: 0 4px 0 14px;
    color: #1e395b;
    letter-spacing: -0.42px;
}

.chosen {
    margin-left: 15px;
}

.views {
    display: flex;
    align-items: center;
    gap: 3px;
    margin-left: auto;
}

.views svg {
    fill: none;
    stroke: #666;
}

.view-on {
    display: flex;
    align-items: center;
    justify-content: center;
    width: 22px;
    height: 23px;
    border: 1px solid #2a91ca;
    background: #bce8fb;
}

.archive {
    left: 69px;
    top: 45px;
    width: 945px;
    height: 482px;
    border: 1px solid #34536b;
    box-shadow: 0 1px 4px rgba(0, 0, 0, 0.2);
}

.title-bar {
    display: flex;
    align-items: center;
    gap: 5px;
    height: 30px;
    padding: 0 17px 0 7px;
    letter-spacing: -0.4px;
}

.title-bar > svg {
    margin-bottom: 2px;
}

.buttons {
    display: flex;
    gap: 35px;
    margin-left: auto;
    padding-bottom: 1px;
}

.buttons svg {
    fill: none;
    stroke: #000;
}

.menu {
    display: flex;
    align-items: center;
    gap: 14px;
    height: 20px;
    padding: 1px 0 0 6px;
    border-bottom: 1px solid #eee;
    letter-spacing: -0.33px;
}

.toolbar {
    display: flex;
    height: 62px;
    margin-left: 4px;
    padding: 7px 0 0 7px;
    border-left: 2px dotted #bbb;
}

.tool {
    display: flex;
    flex-direction: column;
    align-items: center;
    gap: 2px;
}

.tool svg {
    width: 36px;
    height: 34px;
}

.add { width: 48px; }
.extract { width: 69px; }
.test { width: 48px; }
.view { width: 61px; }
.delete { width: 49px; }
.find { width: 60px; }
.wizard { width: 52px; }
.info { width: 56px; }

.virus {
    width: 73px;
    height: 54px;
    margin: -2px 0 0 3px;
    padding-top: 2px;
    border-left: 1px solid #888;
}

.comment { width: 55px; }
.sfx { width: 64px; }

.tool.view svg,
.tool.sfx svg {
    width: 42px;
}

.path-row {
    display: flex;
    height: 30px;
    padding: 3px 0 3px 4px;
}

.up {
    display: flex;
    align-items: center;
    width: 45px;
    height: 24px;
    margin-right: 5px;
    padding-left: 10px;
    border-left: 2px dotted #bbb;
    border-right: 2px dotted #bbb;
}

.up svg,
.path .drop,
.head svg,
.scroll svg {
    fill: none;
    stroke: #888;
    stroke-width: 1.6;
}

.path {
    display: flex;
    align-items: center;
    flex: 1;
    gap: 5px;
    height: 24px;
    padding: 0 3px 0 2px;
    border: 1px solid #666;
    letter-spacing: -0.42px;
}

.path .drop {
    margin-left: auto;
    stroke: #444;
    stroke-width: 1.2;
}

.list {
    display: flex;
    height: 314px;
    border-top: 1px solid #777;
    border-bottom: 1px solid #999;
}

.rows {
    flex: 1;
}

.row {
    display: grid;
    grid-template-columns: 257px 80px 80px 120px 100px 70px;
    height: 19px;
    line-height: 19px;
}

.row span {
    padding: 0 0 0 6px;
    overflow: hidden;
}

.row span:first-child {
    display: flex;
    gap: 2px;
    align-items: center;
    padding-left: 5px;
    background: #f7f7f7;
}

.row.long span:first-child {
    letter-spacing: -0.4px;
}

.row:not(.head) span:first-child svg {
    width: 16px;
    height: 16px;
}

.row span:nth-child(2),
.row span:nth-child(3) {
    padding-right: 6px;
    text-align: right;
    letter-spacing: -0.45px;
}

.row.head {
    height: 25px;
    line-height: 25px;
}

.row.head span {
    border-right: 1px solid #e8e8e8;
}

.row.head span:first-child {
    align-items: flex-start;
    padding-left: 7px;
    background: #fff;
}

.row.head span:nth-child(2),
.row.head span:nth-child(3) {
    padding-right: 5px;
}

.head svg {
    margin: 1px 0 0 84px;
    stroke: #777;
    stroke-width: 1;
}

.scroll {
    display: flex;
    flex-direction: column;
    align-items: center;
    width: 17px;
    margin-right: 2px;
    padding: 7px 0;
    background: #f0f0f0;
}

.scroll svg {
    stroke: #444;
}

.thumb {
    width: 15px;
    height: 197px;
    margin: 83px 0 6px;
    background: #cdcdcd;
}

.status {
    display: flex;
    align-items: center;
    height: 24px;
    padding-top: 2px;
    background: #f0f0f0;
}

.status-left {
    width: 492px;
    padding-left: 3px;
    border-right: 1px solid #d4d4d4;
}

.status-left svg {
    margin-bottom: 3px;
}

.total {
    padding-left: 4px;
    letter-spacing: -0.47px;
}

.grip {
    align-self: flex-end;
    margin-left: auto;
}

.watermark {
    position: absolute;
    left: 1117px;
    top: 656px;
    opacity: 0.6;
    filter: drop-shadow(0 0 1px #666);
}

.watermark text {
    font-family: "Liberation Sans", sans-serif;
    font-size: 52px;
    fill: #fff;
    stroke: #fff;
    stroke-width: 1px;
    letter-spacing: 0;
}

.watermark path {
    fill: none;
    stroke: #fff;
    stroke-width: 4;
}

/* taskbar */
.taskbar {
    display: flex;
    height: 40px;
    background: linear-gradient(90deg, #001622, #020d1c 60%, #03091a);
}

.start {
    display: flex;
    align-items: center;
    justify-content: center;
    width: 48px;
}

.task-search {
    display: flex;
    align-items: center;
    gap: 12px;
    width: 288px;
    padding-left: 12px;
    border-bottom: 1px solid #c9c9c9;
    background: #f2f2f2;
    color: #333;
    font-size: 14.5px;
}

.task-search span {
    padding-top: 2px;
}

.gifts {
    margin-left: auto;
    margin-right: 4px;
}

.task {
    display: flex;
    align-items: center;
    justify-content: center;
    width: 50px;
    border-bottom: 2px solid transparent;
}

.task.first {
    padding-right: 2px;
}

.task.open {
    width: 48px;
    border-bottom-color: #76b9ed;
}

.task.active {
    background: #36454f;
}

.tray {
    display: flex;
    align-items: center;
    gap: 8px;
    margin-left: auto;
    color: #fff;
}

.tray svg {
    fill: none;
    stroke: #fff;
}

.tray .cam {
    margin-left: 3px;
}

.clock {
    width: 56px;
    text-align: center;
    line-height: 18px;
    letter-spacing: -0.25px;
}

.note {
    margin-left: 8px;
}

.peek {
    width: 5px;
    height: 40px;
    margin-left: 11px;
    border-left: 1px solid #555d68;
}
```
